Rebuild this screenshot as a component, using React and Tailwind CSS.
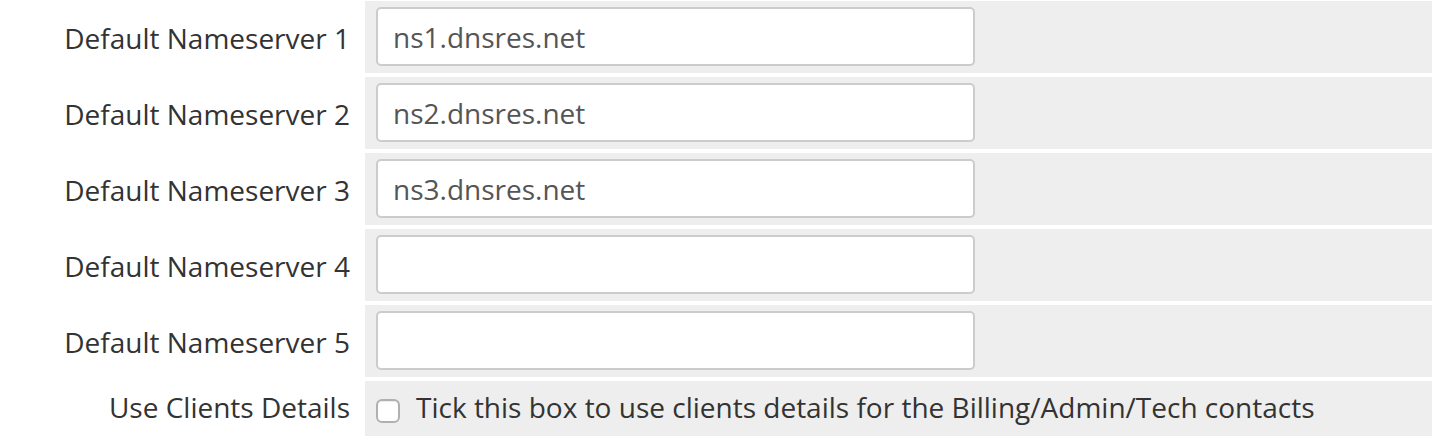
import React from "react";

const rows = [
  { label: "Default Nameserver 1", value: "ns1.dnsres.net" },
  { label: "Default Nameserver 2", value: "ns2.dnsres.net" },
  { label: "Default Nameserver 3", value: "ns3.dnsres.net" },
  { label: "Default Nameserver 4", value: "" },
  { label: "Default Nameserver 5", value: "" },
];

export default function App() {
  return (
    <div
      className="w-[1432px] h-[440px] bg-white pt-[1px] flex flex-col gap-[4px] text-[#333]"
      style={{ fontFamily: '"Open Sans", sans-serif' }}
    >
      {rows.map((r) => (
        <div key={r.label} className="flex h-[72px]">
          <div className="w-[365px] shrink-0 flex items-center justify-end pr-[15px] pt-[2px] text-[28px]">
            {r.label}
          </div>
          <div className="flex-1 bg-[#eeeeee] pl-[11px] pt-[6px]">
            <input
              type="text"
              defaultValue={r.value}
              className="w-[599px] h-[59px] bg-white border-2 border-[#cccccc] rounded-[5px] px-[15px] text-[28px] text-[#555] outline-none"
              style={{ fontFamily: '"Open Sans", sans-serif' }}
            />
          </div>
        </div>
      ))}
      <div className="flex h-[55px]">
        <div className="w-[365px] shrink-0 flex items-center justify-end pr-[15px] pb-[4px] text-[28px]">
          Use Clients Details
        </div>
        <div className="flex-1 bg-[#eeeeee] pl-[11px] pb-[4px] flex items-center gap-[16px] text-[28px]">
          <span className="w-[24px] h-[24px] mt-[9px] rounded-[6px] border-2 border-[#b0b0b0] bg-white shrink-0 shadow-[inset_0_1px_1px_rgba(0,0,0,0.08)]" />
          <span>Tick this box to use clients details for the Billing/Admin/Tech contacts</span>
        </div>
      </div>
    </div>
  );
}
